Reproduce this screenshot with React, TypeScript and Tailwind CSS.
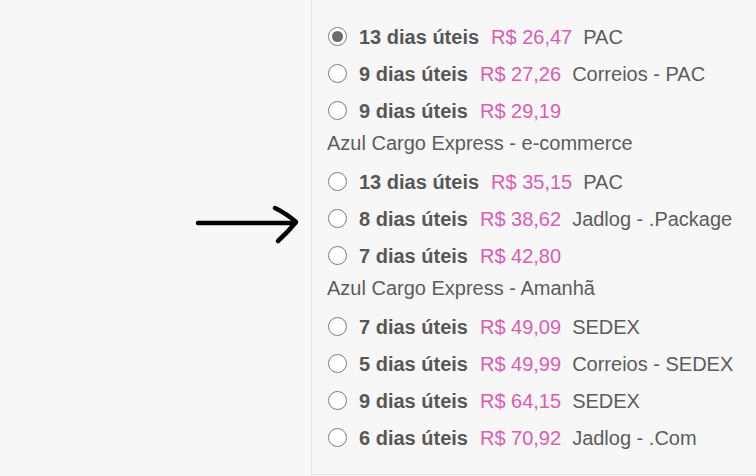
const options = [
  { days: 13, price: '26,47', carrier: 'PAC', selected: true },
  { days: 9, price: '27,26', carrier: 'Correios - PAC' },
  { days: 9, price: '29,19', carrier: '', label: 'Azul Cargo Express - e-commerce' },
  { days: 13, price: '35,15', carrier: 'PAC' },
  { days: 8, price: '38,62', carrier: 'Jadlog - .Package' },
  { days: 7, price: '42,80', carrier: '', label: 'Azul Cargo Express - Amanhã' },
  { days: 7, price: '49,09', carrier: 'SEDEX' },
  { days: 5, price: '49,99', carrier: 'Correios - SEDEX' },
  { days: 9, price: '64,15', carrier: 'SEDEX' },
  { days: 6, price: '70,92', carrier: 'Jadlog - .Com' },
]

function Radio({ checked }: { checked?: boolean }) {
  return (
    <span className="w-[19px] h-[19px] rounded-full border-[1.5px] border-[#7b7b7b] bg-white flex items-center justify-center shrink-0">
      {checked && <span className="w-[11px] h-[11px] rounded-full bg-[#6b6b6b]" />}
    </span>
  )
}

export default function App() {
  return (
    <div
      className="flex w-[756px] h-[476px] bg-[#f7f7f7] text-[20px] text-[#5c5c5c]"
      style={{ fontFamily: '"Liberation Sans", Arial, sans-serif' }}
    >
      {/* arrow */}
      <div className="w-[311px] flex justify-end pr-[10px] pt-[204px]">
        <svg width="106" height="42" viewBox="0 0 106 42" fill="none">
          <path d="M3 19 L100 19" stroke="#000" strokeWidth="4.5" strokeLinecap="round" />
          <path
            d="M80 4 Q92 10 101 18 Q93 28 83 37"
            stroke="#000"
            strokeWidth="4.5"
            strokeLinecap="round"
            strokeLinejoin="round"
          />
        </svg>
      </div>

      {/* shipping options */}
      <div className="flex-1 h-[475px] border-l border-b border-[#e6e6e6] pl-4 pt-[18px]">
        {options.map((o, i) => (
          <div key={i}>
            <label className="flex items-center h-[37px] whitespace-nowrap">
              <Radio checked={o.selected} />
              <span className="ml-3 font-bold text-[#575757]">{o.days} dias úteis</span>
              <span className="ml-3 text-[#dc5cb4]">R$ {o.price}</span>
              {o.carrier && <span className="ml-[11px]">{o.carrier}</span>}
            </label>
            {o.label && <div className="h-[34px] leading-[29px] -ml-px">{o.label}</div>}
          </div>
        ))}
      </div>
    </div>
  )
}
